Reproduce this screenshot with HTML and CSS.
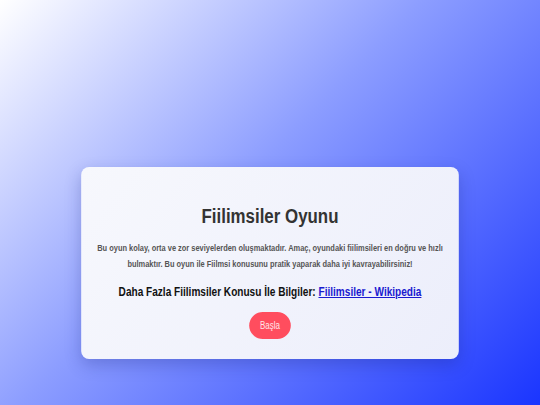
FILE: index.html
```html
<!DOCTYPE html>
<html lang="tr">
<head>
<meta charset="utf-8">
<link rel="stylesheet" href="styles.css">
</head>
<body>
<main class="card">
  <h1 class="title">Fiilimsiler Oyunu</h1>
  <p class="desc">Bu oyun kolay, orta ve zor seviyelerden oluşmaktadır. Amaç, oyundaki fiilimsileri en doğru ve hızlı bulmaktır. Bu oyun ile Fiilmsi konusunu pratik yaparak daha iyi kavrayabilirsiniz!</p>
  <h2 class="more">Daha Fazla Fiilimsiler Konusu İle Bilgiler: <a class="link" href="#">Fiilimsiler - Wikipedia</a></h2>
  <button class="start">Başla</button>
</main>
</body>
</html>
```
FILE: styles.css
```css
html, body {
  margin: 0;
  height: 100%;
  overflow: hidden;
}
body {
  background: linear-gradient(135deg, #ffffff 0%, #8c9dff 45%, #1a35ff 100%);
  font-family: "Liberation Sans", Arial, sans-serif;
  display: flex;
  justify-content: center;
  align-items: flex-start;
  padding-top: 167px;
  box-sizing: border-box;
}
.card {
  flex: none;
  width: 472px;
  box-sizing: border-box;
  background: linear-gradient(135deg, #f7f8fd 0%, #eceefb 100%);
  border-radius: 10px / 8px;
  box-shadow: 0 6px 18px rgba(20, 30, 120, 0.25);
  padding: 36px 10px 20px;
  text-align: center;
  transform: scaleX(0.8);
  transform-origin: center top;
}
.title {
  margin: 0 0 12px;
  font-size: 21.1px;
  line-height: 25px;
  font-weight: bold;
  color: #333;
}
.desc {
  margin: 0 0 13px;
  font-size: 9.3px;
  font-weight: bold;
  line-height: 16px;
  color: #555;
}
.more {
  margin: 0 0 13px;
  font-size: 12.6px;
  line-height: 14px;
  font-weight: bold;
  color: #111;
}
.link {
  color: #1a1ad0;
}
.start {
  display: inline-block;
  vertical-align: top;
  font-family: inherit;
  font-size: 10px;
  color: #ffe6e8;
  background: #ff4d5e;
  border: none;
  border-radius: 17px / 13.5px;
  width: 52px;
  height: 27px;
  padding: 0;
}
```
